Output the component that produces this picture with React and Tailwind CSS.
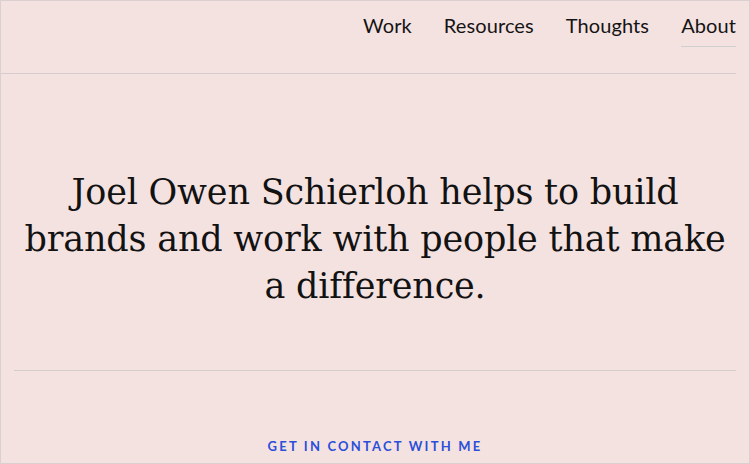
export default function App() {
  const nav = ["Work", "Resources", "Thoughts", "About"];
  return (
    <div className="w-[750px] h-[464px] overflow-hidden border border-[#dccfcf] bg-[#f4e2e1] flex flex-col">
      <header className="h-[73px] shrink-0 border-b border-[#d6cccc] mr-[13px] flex justify-end items-start">
        <nav className="flex gap-[32px] pt-[11px] font-['Lato',sans-serif] text-[20px] tracking-[0.1px] text-[#141414]">
          {nav.map((n) => (
            <a
              key={n}
              className={
                "pb-[7px] leading-[27px] border-b " +
                (n === "About" ? "border-[#cfcfcf]" : "border-transparent")
              }
            >
              {n}
            </a>
          ))}
        </nav>
      </header>
      <main className="flex-1 flex flex-col px-[13px]">
        <div className="h-[297px] border-b border-[#d6cccc] flex items-start justify-center pt-[95px]">
          <h1 className="text-center font-['DejaVu_Serif',serif] text-[35px] leading-[47px] text-[#121212] tracking-[-0.2px]">
            Joel Owen Schierloh helps to build
            <br />
            brands and work with people that make
            <br />
            a difference.
          </h1>
        </div>
        <div className="flex justify-center pt-[66px]">
          <a className="font-['Lato',sans-serif] font-bold text-[13px] tracking-[2.2px] text-[#2a4fd9]">
            GET IN CONTACT WITH ME
          </a>
        </div>
      </main>
    </div>
  );
}
